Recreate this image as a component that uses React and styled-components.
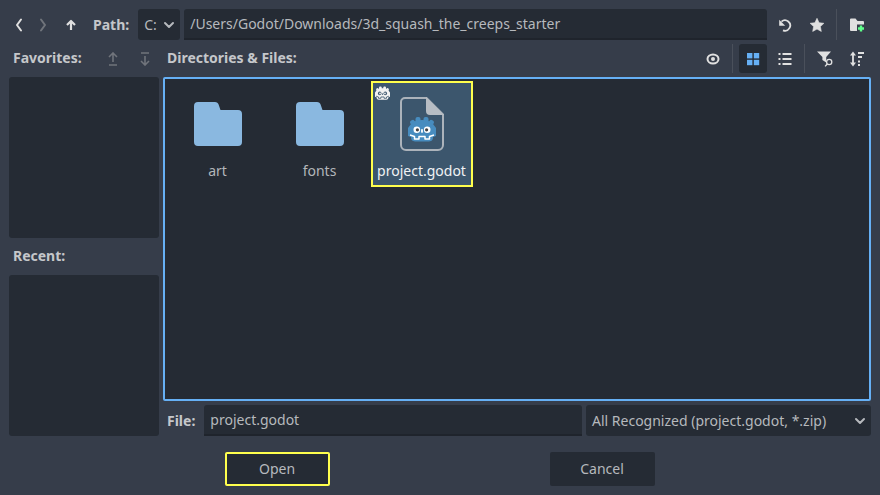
import React from 'react';
import styled, { createGlobalStyle } from 'styled-components';

const Global = createGlobalStyle`
  html, body { margin: 0; padding: 0; background: #363d4a; }
  * { box-sizing: border-box; }
`;

const Dialog = styled.div`
  width: 880px; height: 495px; overflow: hidden;
  background: #363d4a; color: #cdcfd2;
  font-family: "Noto Sans", sans-serif; font-size: 14px; line-height: 20px;
  padding: 9px;
  display: flex; flex-direction: column;
`;
const PathRow = styled.div`
  display: flex; align-items: center; height: 31px; flex: none;
`;
const ToolRow = styled.div`
  display: flex; align-items: center; height: 29px; flex: none; margin-top: 4px;
`;
const Body = styled.div`
  display: flex; gap: 4px; margin-top: 4px; height: 359px; flex: none;
`;
const IconSlot = styled.div`
  flex: none; display: flex; align-items: center; justify-content: center;
  width: ${p => p.$w || 24}px; height: ${p => (p.$on ? 29 : 28)}px;
  margin-left: ${p => p.$ml || 0}px; margin-right: ${p => p.$mr || 0}px;
  border-radius: 3px;
  background: ${p => (p.$on ? '#252b34' : 'transparent')};
  color: ${p => (p.$dim ? '#70747b' : '#e0e0e0')};
`;
const Label = styled.span`
  flex: none; font-weight: 700; color: #c5c7ca; margin-left: ${p => p.$ml || 0}px;
  width: ${p => (p.$w ? `${p.$w}px` : 'auto')};
`;
const ToolLabel = styled(Label)`
  padding-bottom: 2px;
`;
const Drive = styled.div`
  flex: none; width: 42px; height: 31px; margin-left: 9px; border-radius: 3px;
  background: #252b34; display: flex; align-items: center; justify-content: space-between;
  padding: 0 4px 0 6px; color: #b6b9bd;
`;
const Field = styled.div`
  height: 31px; background: #252b34; border-radius: 3px 3px 0 0;
  border-bottom: 2px solid #1f242c; padding: 0 6px; display: flex; align-items: center;
  color: #b6b9bd; flex: 1;
  margin-left: ${p => p.$ml || 0}px;
`;
const Sep = styled.div`
  flex: none; width: 1px; background: #4a505b;
  height: ${p => p.$h || 29}px;
  margin-left: ${p => p.$l}px; margin-right: ${p => p.$r}px;
`;
const Spacer = styled.div`flex: 1;`;
const Side = styled.div`
  width: 150px; flex: none; display: flex; flex-direction: column;
`;
const SidePanel = styled.div`
  height: 161px; background: #252b34; border-radius: 3px; flex: none;
`;
const RecentHead = styled.div`
  height: 37px; display: flex; align-items: center; padding: 0 0 2px 4px; flex: none;
`;
const Main = styled.div`
  flex: 1; min-width: 0; display: flex; flex-direction: column;
`;
const Files = styled.div`
  height: 324px; flex: none; border: 2px solid #66b0f5; background: #252b34;
  border-radius: 2px; padding: 2px; display: flex; align-items: flex-start;
`;
const Tile = styled.div`
  position: relative; width: 102px; height: 106px; flex: none;
  display: flex; flex-direction: column; align-items: center;
  border: 2px solid ${p => (p.$sel ? '#ffff4d' : 'transparent')};
  background: ${p => (p.$sel ? '#3c566d' : 'transparent')};
  color: ${p => (p.$sel ? '#f0f2f4' : '#b3b6ba')};
`;
const TileIcon = styled.div`
  height: 64px; margin-top: ${p => p.$mt}px; flex: none; display: flex; align-items: flex-start;
`;
const TileName = styled.div`
  position: absolute; left: 0; right: 1px; top: 78px; text-align: center; line-height: 20px;
`;
const Badge = styled.div`
  position: absolute; left: 2px; top: 3px; width: 15px; height: 15px; display: flex;
`;
const FileRow = styled.div`
  display: flex; align-items: center; height: 31px; margin-top: 4px; flex: none;
`;
const FilterSelect = styled.div`
  flex: none; width: 285px; height: 31px; margin-left: 4px; background: #252b34; border-radius: 3px;
  display: flex; align-items: center; justify-content: space-between; padding: 0 4px 0 6px; color: #b6b9bd;
`;
const Footer = styled.div`
  height: 34px; margin-top: 16px; flex: none; display: flex;
`;
const Button = styled.div`
  flex: none; width: 105px; height: 34px; border-radius: 2px; background: #252b34;
  display: flex; align-items: center; justify-content: center; color: #b6b9bd;
  border: 2px solid ${p => (p.$focus ? '#ffff4d' : 'transparent')};
  padding-right: 1px;
  margin-left: ${p => p.$ml}px;
`;

const Chevron = ({ dir = 'down' }) => {
  const d = { down: 'M3 5l4 4 4-4', left: 'M9 1.500L5 7l4 5.500', right: 'M5 1.500L9 7l-4 5.500' }[dir];
  return (
    <svg width="14" height="14" viewBox="0 0 14 14" fill="none" stroke="currentColor" strokeWidth="2" strokeLinecap="round" strokeLinejoin="round">
      <path d={d} />
    </svg>
  );
};
const Up = () => (
  <svg width="14" height="14" viewBox="0 0 14 14" fill="none" stroke="currentColor" strokeWidth="2.200" strokeLinejoin="round">
    <path d="M7 12V3M3 7l4-4 4 4" />
  </svg>
);
const MoveArrow = ({ down }) => (
  <svg width="14" height="14" viewBox="0 0 14 14" fill="none" stroke="currentColor" strokeWidth="1.600">
    {down
      ? <path d="M3 1h8M7 4v9M3 9l4 4 4-4" />
      : <path d="M3 13h8M7 10V1M3 5l4-4 4 4" />}
  </svg>
);
const Reload = () => (
  <svg width="16" height="16" viewBox="0 0 16 16" fill="none" stroke="currentColor" strokeWidth="1.800">
    <path d="M4.500 4.600A5.200 5.200 0 1 1 6 13.300" />
    <path d="M2.200 2.800v6h6z" fill="currentColor" stroke="none" />
  </svg>
);
const Star = () => (
  <svg width="16" height="16" viewBox="0 0 16 16" fill="currentColor">
    <path d="M8 1.300l2.100 4.400 4.800.6-3.500 3.300.9 4.800L8 12.100l-4.300 2.300.9-4.800L1.100 6.300l4.800-.6z" stroke="currentColor" strokeWidth="0.600" strokeLinejoin="round" />
  </svg>
);
const NewFolder = () => (
  <svg width="16" height="16" viewBox="0 0 16 16">
    <path d="M1 2.500a1 1 0 0 1 1-1h4.500l2 2.500H14a1 1 0 0 1 1 1v8a1 1 0 0 1-1 1H2a1 1 0 0 1-1-1z" fill="#e0e0e0" />
    <path d="M8 7.500h8V16H8z" fill="#363d4a" />
    <path d="M12 8.500v6M9 11.500h6" stroke="#5fff8a" strokeWidth="2.400" fill="none" />
  </svg>
);
const Eye = () => (
  <svg width="16" height="16" viewBox="0 0 16 16" fill="none" stroke="currentColor">
    <ellipse cx="8" cy="8" rx="5.500" ry="4.500" strokeWidth="2" />
    <circle cx="8" cy="8" r="2" fill="currentColor" stroke="none" />
  </svg>
);
const GridIcon = () => (
  <svg width="14" height="14" viewBox="0 0 14 14" fill="#66b0f5">
    <rect x="1" y="1" width="5.400" height="5.400" /><rect x="7.800" y="1" width="5.400" height="5.400" />
    <rect x="1" y="7.800" width="5.400" height="5.400" /><rect x="7.800" y="7.800" width="5.400" height="5.400" />
  </svg>
);
const ListIcon = () => (
  <svg width="14" height="14" viewBox="0 0 14 14" fill="#e0e0e0">
    <rect x="0.500" y="1" width="2" height="2" /><rect x="4.500" y="1" width="9" height="2" />
    <rect x="0.500" y="6" width="2" height="2" /><rect x="4.500" y="6" width="9" height="2" />
    <rect x="0.500" y="11" width="2" height="2" /><rect x="4.500" y="11" width="9" height="2" />
  </svg>
);
const FilterIcon = () => (
  <svg width="18" height="18" viewBox="0 0 18 18">
    <path d="M1 1.500h14l-4.800 5.600v5.400L6.400 10V7.100z" fill="#e0e0e0" />
    <circle cx="13.200" cy="12" r="2.600" fill="none" stroke="#e0e0e0" strokeWidth="1.300" />
    <path d="M11.300 14l-2.200 2.400" stroke="#e0e0e0" strokeWidth="1.400" />
  </svg>
);
const SortIcon = () => (
  <svg width="16" height="16" viewBox="0 0 16 16" fill="#e0e0e0">
    <path d="M4 .5L1 4.500h2.100v7H1l3 4 3-4H4.900v-7H7z" />
    <rect x="9" y="1" width="6" height="2" /><rect x="9" y="5" width="4" height="2" />
    <rect x="9" y="9.500" width="2" height="2" /><rect x="9" y="13" width="2" height="2" />
  </svg>
);
const Folder = () => (
  <svg width="48" height="44" viewBox="0 0 48 44">
    <path d="M0 4a4 4 0 0 1 4-4h17c2 0 3 1 3.600 2.400L26.500 8H44a4 4 0 0 1 4 4v28a4 4 0 0 1-4 4H4a4 4 0 0 1-4-4z" fill="#8ab8e0" />
  </svg>
);
const GodotFace = ({ size, body = '#478cbf', eye = '#fff', pupil = '#414042' }) => (
  <svg width={size} height={size * 26 / 28} viewBox="0 0 28 26">
    <g fill={body}>
      <path d="M3 8c3-3 6-4 11-4s8 1 11 4l3 4v8l-3 1c0 3-1 4-4 4.500H7C4 25 3 24 3 21l-3-1v-8z" />
      <rect x="7.500" y="1" width="5" height="7" rx="2" />
      <rect x="15.500" y="1" width="5" height="7" rx="2" />
      <rect x="2.500" y="4" width="5" height="6" rx="2" transform="rotate(-35 5 7)" />
      <rect x="20.500" y="4" width="5" height="6" rx="2" transform="rotate(35 23 7)" />
    </g>
    <path d="M2 19l4.500 1.500v2.500H11v-2.500h6V23h4.500v-2.500L26 19" fill="none" stroke={eye} strokeWidth="1.500" strokeLinejoin="round" />
    <circle cx="8.800" cy="13.800" r="3.300" fill={eye} /><circle cx="19.200" cy="13.800" r="3.300" fill={eye} />
    <circle cx="9.400" cy="13.800" r="1.600" fill={pupil} /><circle cx="18.600" cy="13.800" r="1.600" fill={pupil} />
    <rect x="13.100" y="13" width="1.800" height="3.800" rx=".9" fill={eye} />
  </svg>
);
const ProjectFile = () => (
  <svg width="44" height="54" viewBox="0 0 44 54">
    <path d="M5 1h21.500L43 17.500V48a5 5 0 0 1-5 5H6a5 5 0 0 1-5-5V5a4 4 0 0 1 4-4z" fill="none" stroke="#acb3bb" strokeWidth="2" />
    <path d="M26 0L44 18H30a4 4 0 0 1-4-4z" fill="#b7bdc4" />
    <foreignObject x="8" y="19" width="28" height="27">
      <GodotFace size={28} />
    </foreignObject>
  </svg>
);

export default function App() {
  return (
    <Dialog>
      <Global />
      <PathRow>
        <IconSlot $ml={-2}><Chevron dir="left" /></IconSlot>
        <IconSlot $dim><Chevron dir="right" /></IconSlot>
        <IconSlot $ml={4}><Up /></IconSlot>
        <Label $ml={10}>Path:</Label>
        <Drive>C:<Chevron /></Drive>
        <Field $ml={4}>/Users/Godot/Downloads/3d_squash_the_creeps_starter</Field>
        <IconSlot $w={32} $ml={2}><Reload /></IconSlot>
        <IconSlot $w={32}><Star /></IconSlot>
        <Sep $h={31} $l={3} $r={3} />
        <IconSlot $w={24} $ml={5} $mr={2}><NewFolder /></IconSlot>
      </PathRow>
      <ToolRow>
        <ToolLabel $ml={4} $w={88}>Favorites:</ToolLabel>
        <IconSlot $dim><MoveArrow /></IconSlot>
        <IconSlot $dim $ml={8}><MoveArrow down /></IconSlot>
        <ToolLabel $ml={10}>Directories &amp; Files:</ToolLabel>
        <Spacer />
        <IconSlot $w={28}><Eye /></IconSlot>
        <Sep $l={5} $r={6} />
        <IconSlot $w={28} $on><GridIcon /></IconSlot>
        <IconSlot $w={32} $ml={2}><ListIcon /></IconSlot>
        <Sep $l={3} $r={6} />
        <IconSlot $w={28}><FilterIcon /></IconSlot>
        <IconSlot $w={28} $ml={4}><SortIcon /></IconSlot>
      </ToolRow>
      <Body>
        <Side>
          <SidePanel />
          <RecentHead><Label>Recent:</Label></RecentHead>
          <SidePanel />
        </Side>
        <Main>
          <Files>
            <Tile>
              <TileIcon $mt={19}><Folder /></TileIcon>
              <TileName>art</TileName>
            </Tile>
            <Tile>
              <TileIcon $mt={19}><Folder /></TileIcon>
              <TileName>fonts</TileName>
            </Tile>
            <Tile $sel>
              <Badge><GodotFace size={15} body="#f2f2f2" eye="#3c566d" pupil="#f2f2f2" /></Badge>
              <TileIcon $mt={14}><ProjectFile /></TileIcon>
              <TileName>project.godot</TileName>
            </Tile>
          </Files>
          <FileRow>
            <Label $ml={4}>File:</Label>
            <Field $ml={9}>project.godot</Field>
            <FilterSelect>All Recognized (project.godot, *.zip)<Chevron /></FilterSelect>
          </FileRow>
        </Main>
      </Body>
      <Footer>
        <Button $focus $ml={216}>Open</Button>
        <Button $ml={220}>Cancel</Button>
      </Footer>
    </Dialog>
  );
}
